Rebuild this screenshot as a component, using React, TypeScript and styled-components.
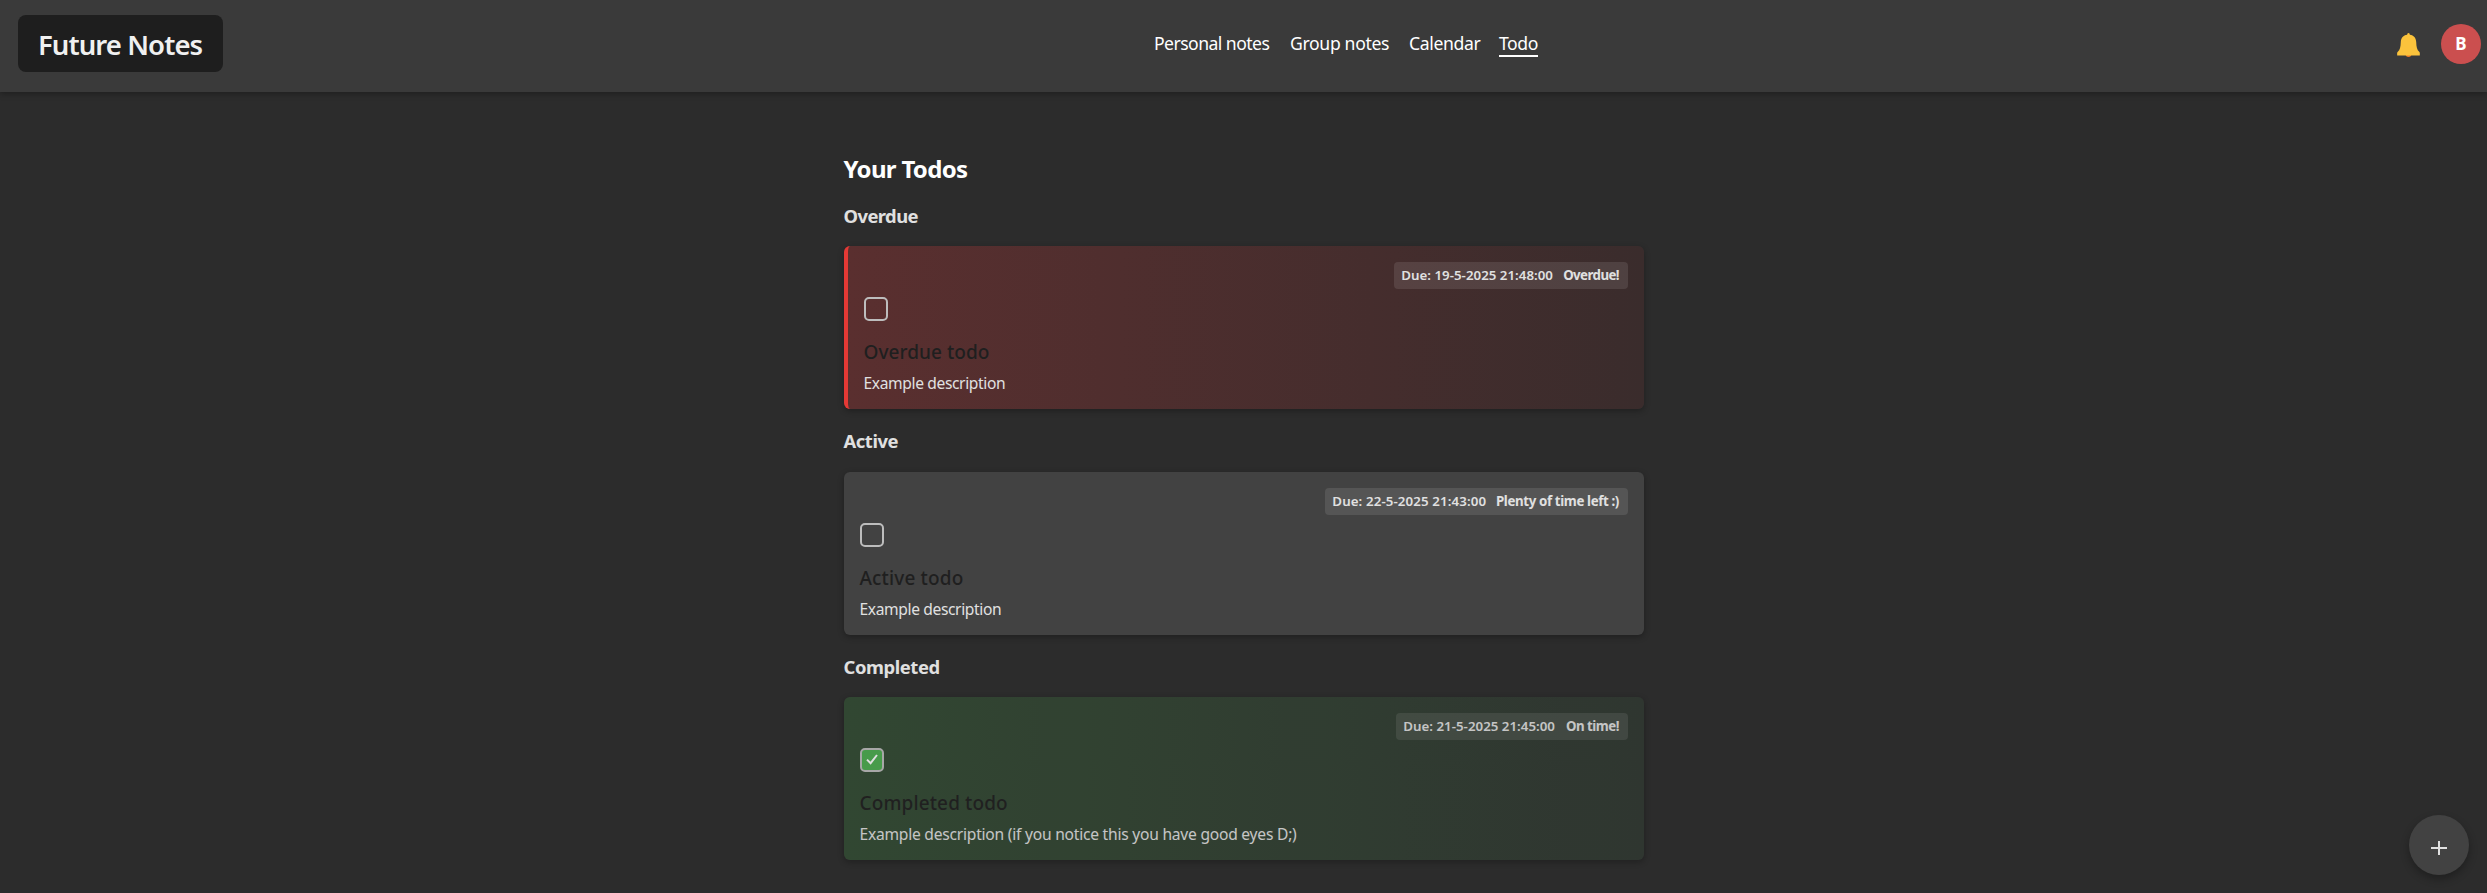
import React from 'react';
import styled, { createGlobalStyle } from 'styled-components';

const GlobalStyle = createGlobalStyle`
  * { box-sizing: border-box; }
  html, body { margin: 0; height: 100%; }
  body {
    background: #2c2c2c;
    color: #e0e0e0;
    font-family: 'Noto Sans', 'Open Sans', sans-serif;
    overflow: hidden;
  }
`;

type Tracked = { $track?: number };

const Header = styled.header`
  display: flex;
  align-items: center;
  height: 92px;
  padding: 15px 6px 19px 18px;
  background: #3a3a3a;
  box-shadow: 0 2px 6px rgba(0, 0, 0, 0.3);
`;

const Logo = styled.h1`
  align-self: flex-start;
  width: 205px;
  height: 57px;
  margin: 0;
  padding: 11px 0 9px 20px;
  border-radius: 8px;
  background: #1e1e1e;
  color: #f0f0f0;
  font-size: 27.5px;
  font-weight: 600;
  line-height: 37px;
  letter-spacing: -0.92px;
  white-space: nowrap;
`;

const Nav = styled.nav`
  display: grid;
  grid-template-columns: 116px 99px 70px 39px;
  column-gap: 20px;
  margin-left: 931px;
`;

const NavLink = styled.a<Tracked & { $active?: boolean }>`
  border-bottom: 2px solid ${(p) => (p.$active ? '#ffffff' : 'transparent')};
  color: #ffffff;
  font-size: 17.6px;
  line-height: 24px;
  letter-spacing: ${(p) => p.$track ?? 0}px;
  white-space: nowrap;
`;

const Account = styled.div`
  display: flex;
  align-items: center;
  gap: 21px;
  margin-left: auto;
`;

const BellIcon = styled.svg`
  display: block;
  width: 23px;
  height: 24px;
  margin-top: 2px;
`;

const Avatar = styled.div`
  display: flex;
  align-items: center;
  justify-content: center;
  width: 40px;
  height: 40px;
  border-radius: 50%;
  background: #cb4f4f;
  color: #ffffff;
  font-size: 17px;
  font-weight: 700;
  line-height: 24px;
`;

const Main = styled.main`
  width: 800px;
  margin: 61px auto 0;
`;

const PageTitle = styled.h2`
  margin: 0 0 19px;
  color: #ffffff;
  font-size: 24px;
  font-weight: 700;
  line-height: 32px;
  letter-spacing: -0.7px;
`;

const Section = styled.section`
  margin-bottom: 20.2px;
`;

const SectionTitle = styled.h3<Tracked>`
  margin: 0 0 18.2px;
  font-size: 18.4px;
  font-weight: 700;
  line-height: 24px;
  letter-spacing: ${(p) => p.$track ?? 0}px;
`;

type Kind = 'overdue' | 'active' | 'completed';

const backgrounds: Record<Kind, string> = {
  overdue: 'linear-gradient(to right, #5a2f2f, #3a2c2c)',
  active: '#424242',
  completed: 'linear-gradient(to right, #334c34, #303831)',
};

const Card = styled.article<{ $kind: Kind }>`
  height: 163px;
  padding: 16px;
  border-left: ${(p) => (p.$kind === 'overdue' ? '4px solid #e53935' : '0')};
  border-radius: 6px;
  background: ${(p) => backgrounds[p.$kind]};
  box-shadow: 0 2px 6px rgba(0, 0, 0, 0.3);
  opacity: ${(p) => (p.$kind === 'completed' ? 0.85 : 1)};
`;

const Due = styled.div<{ $width: number }>`
  display: flex;
  justify-content: space-between;
  width: ${(p) => p.$width}px;
  height: 27px;
  margin: 0 0 8px auto;
  padding: 0 8.5px 0 7.8px;
  border-radius: 4px;
  background: rgba(255, 255, 255, 0.1);
  font-size: 13.3px;
  line-height: 27px;
  white-space: nowrap;
`;

const DueDate = styled.span<Tracked>`
  font-weight: 600;
  letter-spacing: ${(p) => p.$track ?? 0}px;
`;

const DueStatus = styled.span<Tracked>`
  font-weight: 700;
  letter-spacing: ${(p) => p.$track ?? 0}px;
`;

const Checkbox = styled.div<{ $checked: boolean }>`
  display: flex;
  align-items: center;
  justify-content: center;
  width: 24px;
  height: 24px;
  margin-bottom: 17px;
  border: 2px solid #bdbdbd;
  border-radius: 5px;
  background: ${(p) => (p.$checked ? '#4caf50' : 'transparent')};
`;

const TodoTitle = styled.div<Tracked>`
  margin-bottom: 5px;
  color: #1f1f1f;
  font-size: 19px;
  font-weight: 500;
  line-height: 28px;
  letter-spacing: ${(p) => p.$track ?? 0}px;
`;

const Description = styled.div<Tracked>`
  font-size: 15.6px;
  line-height: 24px;
  letter-spacing: ${(p) => p.$track ?? 0}px;
`;

const AddButton = styled.button`
  position: fixed;
  right: 18px;
  bottom: 18px;
  display: flex;
  align-items: center;
  justify-content: center;
  width: 60px;
  height: 60px;
  padding: 6px 0 0;
  border: 0;
  border-radius: 50%;
  background: #424242;
  box-shadow: 0 4px 8px rgba(0, 0, 0, 0.3);
`;

type Text = { text: string; track: number };

interface Todo {
  kind: Kind;
  heading: Text;
  title: Text;
  description: Text;
  due: Text;
  status: Text;
  badgeWidth: number;
}

const links: Text[] = [
  { text: 'Personal notes', track: -0.55 },
  { text: 'Group notes', track: -0.34 },
  { text: 'Calendar', track: -0.36 },
  { text: 'Todo', track: -0.45 },
];

const todos: Todo[] = [
  {
    kind: 'overdue',
    heading: { text: 'Overdue', track: -0.57 },
    title: { text: 'Overdue todo', track: 0.05 },
    description: { text: 'Example description', track: -0.37 },
    due: { text: 'Due: 19-5-2025 21:48:00', track: 0.014 },
    status: { text: 'Overdue!', track: -0.58 },
    badgeWidth: 234,
  },
  {
    kind: 'active',
    heading: { text: 'Active', track: -0.44 },
    title: { text: 'Active todo', track: 0.15 },
    description: { text: 'Example description', track: -0.37 },
    due: { text: 'Due: 22-5-2025 21:43:00', track: 0.11 },
    status: { text: 'Plenty of time left :)', track: -0.37 },
    badgeWidth: 303,
  },
  {
    kind: 'completed',
    heading: { text: 'Completed', track: -0.41 },
    title: { text: 'Completed todo', track: 0.12 },
    description: {
      text: 'Example description (if you notice this you have good eyes D;)',
      track: -0.23,
    },
    due: { text: 'Due: 21-5-2025 21:45:00', track: 0.014 },
    status: { text: 'On time!', track: -0.5 },
    badgeWidth: 232,
  },
];

function Bell() {
  return (
    <BellIcon viewBox="0 0 23 24">
      <circle cx="11.5" cy="21" r="2.9" fill="#f27c22" />
      <path
        d="M11.5 0C12.3 0 12.8.7 12.8 1.8C16.8 2.3 19 5 19.2 9C19.4 14 20 17 22.2 18.8C22.8 19.3 23 20 22.8 22.4H.2C0 20 .2 19.3.8 18.8C3 17 3.6 14 3.8 9C4 5 6.2 2.3 10.2 1.8C10.2.7 10.7 0 11.5 0Z"
        fill="#fbc33c"
      />
    </BellIcon>
  );
}

function TodoSection({ todo }: { todo: Todo }) {
  const checked = todo.kind === 'completed';
  return (
    <Section>
      <SectionTitle $track={todo.heading.track}>{todo.heading.text}</SectionTitle>
      <Card $kind={todo.kind}>
        <Due $width={todo.badgeWidth}>
          <DueDate $track={todo.due.track}>{todo.due.text}</DueDate>
          <DueStatus $track={todo.status.track}>{todo.status.text}</DueStatus>
        </Due>
        <Checkbox $checked={checked}>
          {checked && (
            <svg width="12" height="11" viewBox="0 0 12 11" fill="none">
              <path d="M1 5.6L4.6 9.2L11 1" stroke="#ffffff" strokeWidth="2" />
            </svg>
          )}
        </Checkbox>
        <TodoTitle $track={todo.title.track}>{todo.title.text}</TodoTitle>
        <Description $track={todo.description.track}>{todo.description.text}</Description>
      </Card>
    </Section>
  );
}

export default function App() {
  return (
    <>
      <GlobalStyle />
      <Header>
        <Logo>Future Notes</Logo>
        <Nav>
          {links.map((l) => (
            <NavLink key={l.text} $track={l.track} $active={l.text === 'Todo'}>
              {l.text}
            </NavLink>
          ))}
        </Nav>
        <Account>
          <Bell />
          <Avatar>B</Avatar>
        </Account>
      </Header>
      <Main>
        <PageTitle>Your Todos</PageTitle>
        {todos.map((t) => (
          <TodoSection key={t.kind} todo={t} />
        ))}
      </Main>
      <AddButton aria-label="Add todo">
        <svg width="16" height="16" viewBox="0 0 16 16">
          <path d="M0 8H16M8 1V15" stroke="#e0e0e0" strokeWidth="2" />
        </svg>
      </AddButton>
    </>
  );
}
